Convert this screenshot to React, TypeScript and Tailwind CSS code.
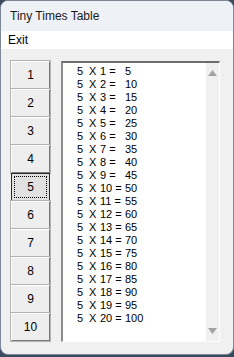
import React from "react";

const nums = Array.from({ length: 20 }, (_, i) => i + 1);
const btns = Array.from({ length: 10 }, (_, i) => i + 1);

export default function App() {
  const selected = 5;

  return (
    <div className="w-[234px] h-[357px] bg-[#3b4a5e] overflow-hidden">
      <div
        className="w-[234px] h-[355px] rounded-[8px] border border-[#7d8899] bg-[#f0f0f0] overflow-hidden flex flex-col"
        style={{ fontFamily: '"Liberation Sans", Arial, sans-serif' }}
      >
        {/* title bar */}
        <div className="h-[30px] bg-[#eef2f7] flex items-center pl-[9px] text-[12px] text-[#1a1a1a] shrink-0">
          Tiny Times Table
        </div>
        {/* menu */}
        <div className="h-[18px] bg-white flex items-center pl-[7px] text-[12px] text-black shrink-0">
          Exit
        </div>

        {/* body */}
        <div className="flex pt-[12px] pl-[10px] gap-[11px]">
          <div className="flex flex-col w-[39px]">
            {btns.map((n) => (
              <div
                key={n}
                className={
                  n === selected
                    ? "h-[28px] border border-[#2b2b2b] bg-[#e1e1e1] flex items-center justify-center p-[2px]"
                    : "h-[28px] border border-t-white border-l-white border-b-[#7a7a7a] border-r-[#7a7a7a] bg-[#eeeeee] outline outline-1 outline-[#b4b4b4] flex items-center justify-center"
                }
              >
                {n === selected ? (
                  <div className="w-full h-full border border-dotted border-black flex items-center justify-center text-[12px] text-black">
                    {n}
                  </div>
                ) : (
                  <span className="text-[12px] text-black">{n}</span>
                )}
              </div>
            ))}
          </div>

          {/* listbox */}
          <div className="w-[159px] h-[281px] border-t-2 border-l-2 border-t-[#6d6d6d] border-l-[#8c8c8c] border-b border-r border-b-white border-r-white bg-white flex">
            <div className="flex-1 pl-[14px] pt-[2px] text-[11px] leading-[13px] text-black">
              {nums.map((n) => (
                <div key={n} className="flex">
                  <span className="w-[12px] shrink-0">5</span>
                  <span className="w-[11px] shrink-0">X</span>
                  <span className="w-[25px] shrink-0 flex gap-[3px]">
                    <span>{n}</span>
                    <span>=</span>
                  </span>
                  <span className="shrink-0">{5 * n}</span>
                </div>
              ))}
            </div>
            <div className="w-[13px] bg-[#f0f0f0] flex flex-col items-center justify-between py-[7px]">
              <svg width="9" height="6" viewBox="0 0 9 6">
                <polygon points="4.5,0 9,6 0,6" fill="#a3a3a3" />
              </svg>
              <svg width="9" height="6" viewBox="0 0 9 6">
                <polygon points="0,0 9,0 4.5,6" fill="#a3a3a3" />
              </svg>
            </div>
          </div>
        </div>
      </div>
    </div>
  );
}
